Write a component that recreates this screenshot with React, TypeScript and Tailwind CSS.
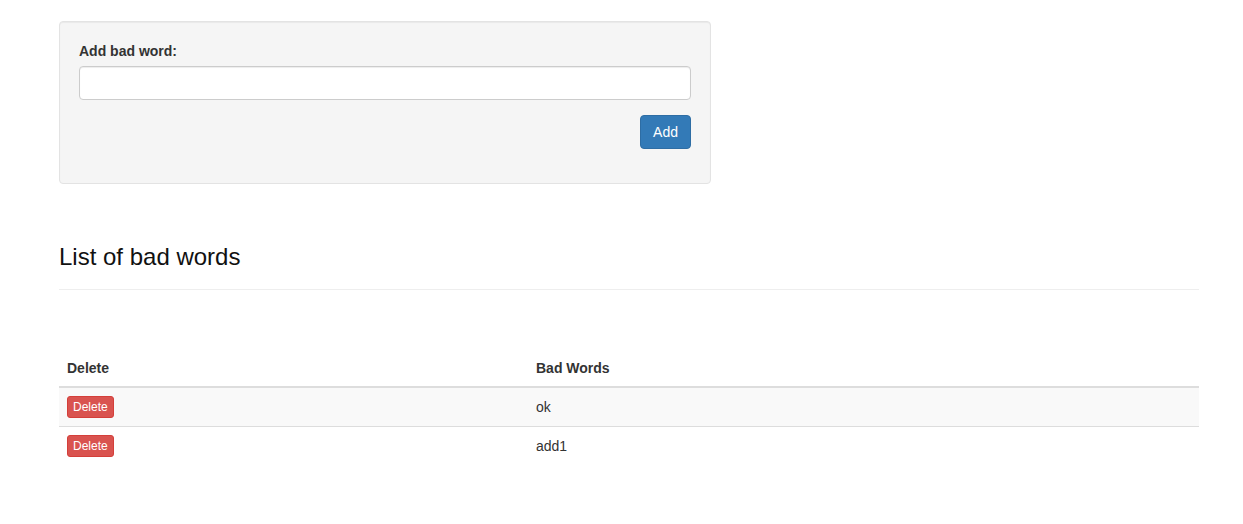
export default function App() {
  const words = ["ok", "add1"];

  return (
    <div className="min-h-[524px] bg-white font-['Liberation_Sans',Arial,sans-serif] text-[14px] leading-[20px] text-[#333]">
      <div className="ml-[59px] w-[1140px] pt-[21px]">
        {/* Add form */}
        <form className="w-[652px] rounded-[4px] border border-[#e3e3e3] bg-[#f5f5f5] p-[19px] shadow-[inset_0_1px_1px_rgba(0,0,0,0.05)]">
          <div className="mb-[15px]">
            <label className="mb-[5px] block font-bold">Add bad word:</label>
            <input
              type="text"
              className="block h-[34px] w-full rounded-[4px] border border-[#ccc] bg-white px-3 py-[6px] shadow-[inset_0_1px_1px_rgba(0,0,0,0.075)] outline-none"
            />
          </div>
          <div className="mb-[15px] flex justify-end">
            <button
              type="button"
              className="h-[34px] rounded-[4px] border border-[#2e6da4] bg-[#337ab7] px-3 text-white"
            >
              Add
            </button>
          </div>
        </form>

        {/* Header */}
        <div className="mt-[60px] border-b border-[#eee] pb-[9px]">
          <h3 className="mb-[10px] text-[24px] leading-[26.4px] font-normal text-[#111]">
            List of bad words
          </h3>
        </div>

        {/* Table */}
        <table className="mt-[60px] w-full border-collapse">
          <thead>
            <tr>
              <th className="w-[469px] border-b-2 border-[#ddd] p-2 text-left font-bold">Delete</th>
              <th className="border-b-2 border-[#ddd] p-2 text-left font-bold">Bad Words</th>
            </tr>
          </thead>
          <tbody>
            {words.map((w, i) => (
              <tr key={w} className={i % 2 === 0 ? "bg-[#f9f9f9]" : ""}>
                <td className={`p-2 ${i > 0 ? "border-t border-[#ddd]" : ""}`}>
                  <button
                    type="button"
                    className="block h-[22px] rounded-[3px] border border-[#d43f3a] bg-[#d9534f] px-[5px] text-[12px] leading-[18px] text-white"
                  >
                    Delete
                  </button>
                </td>
                <td className={`p-2 ${i > 0 ? "border-t border-[#ddd]" : ""}`}>{w}</td>
              </tr>
            ))}
          </tbody>
        </table>
      </div>
    </div>
  );
}
